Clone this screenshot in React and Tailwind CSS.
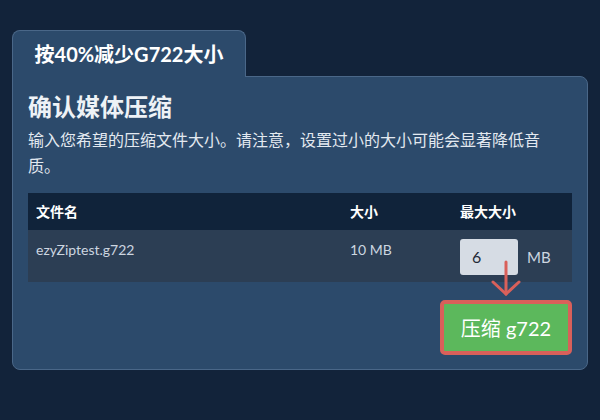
export default function App() {
  return (
    <div
      className="relative min-h-[420px] bg-[#12233a] px-3 pt-[30px]"
      style={{ fontFamily: '"Lato", "Noto Sans CJK SC", sans-serif' }}
    >
      {/* tab */}
      <div className="relative z-10 -mb-px flex h-[47px] w-[234px] items-center justify-center rounded-t-lg border border-b-0 border-[#4a6788] bg-[#2c4a6b]">
        <span className="text-[20px] font-bold text-white">按40%减少G722大小</span>
      </div>

      {/* panel */}
      <div className="rounded-tr-lg rounded-b-lg border border-[#4a6788] bg-[#2c4a6b] px-[15px] pt-[14px] pb-[14px]">
        <h2 className="text-[24px] leading-[32px] font-bold text-[#eef2f6]">确认媒体压缩</h2>
        <p className="mt-1 pr-4 text-[16px] leading-[26px] text-[#e3e9f0]">
          输入您希望的压缩文件大小。请注意，设置过小的大小可能会显著降低音质。
        </p>

        <table className="mt-[14px] w-full border-collapse text-[14px]">
          <thead>
            <tr className="h-[37px] bg-[#10233a] text-left text-white">
              <th className="w-[314px] px-2 font-bold">文件名</th>
              <th className="w-[110px] px-2 font-bold">大小</th>
              <th className="px-2 font-bold">最大大小</th>
            </tr>
          </thead>
          <tbody>
            <tr className="h-[52px] bg-[#2c3e54] align-top text-[#cdd6e0]">
              <td className="px-2 pt-[9px]">ezyZiptest.g722</td>
              <td className="px-2 pt-[9px]">10 MB</td>
              <td className="px-2 pt-[9px] pb-[7px]">
                <div className="flex items-center gap-[9px]">
                  <div className="flex h-[36px] w-[58px] items-center rounded-[3px] bg-[#d6dce4] pl-3 text-[16px] text-[#1f2937]">
                    6
                  </div>
                  <span className="text-[15px] text-[#cdd6e0]">MB</span>
                </div>
              </td>
            </tr>
          </tbody>
        </table>

        <div className="mt-[18px] flex justify-end">
          <button className="h-[55px] w-[132px] rounded-[5px] border-4 border-[#d9605a] bg-[#5cb85c] text-[20px] text-white">
            压缩 g722
          </button>
        </div>
      </div>

      {/* annotation arrow */}
      <svg
        className="absolute left-[488px] top-[258px]"
        width="36"
        height="42"
        viewBox="0 0 36 42"
        fill="none"
        stroke="#d9605a"
        strokeWidth="3"
        strokeLinecap="round"
      >
        <line x1="18" y1="4" x2="18" y2="36" />
        <polyline points="5,24 18,36 31,24" />
      </svg>
    </div>
  );
}
